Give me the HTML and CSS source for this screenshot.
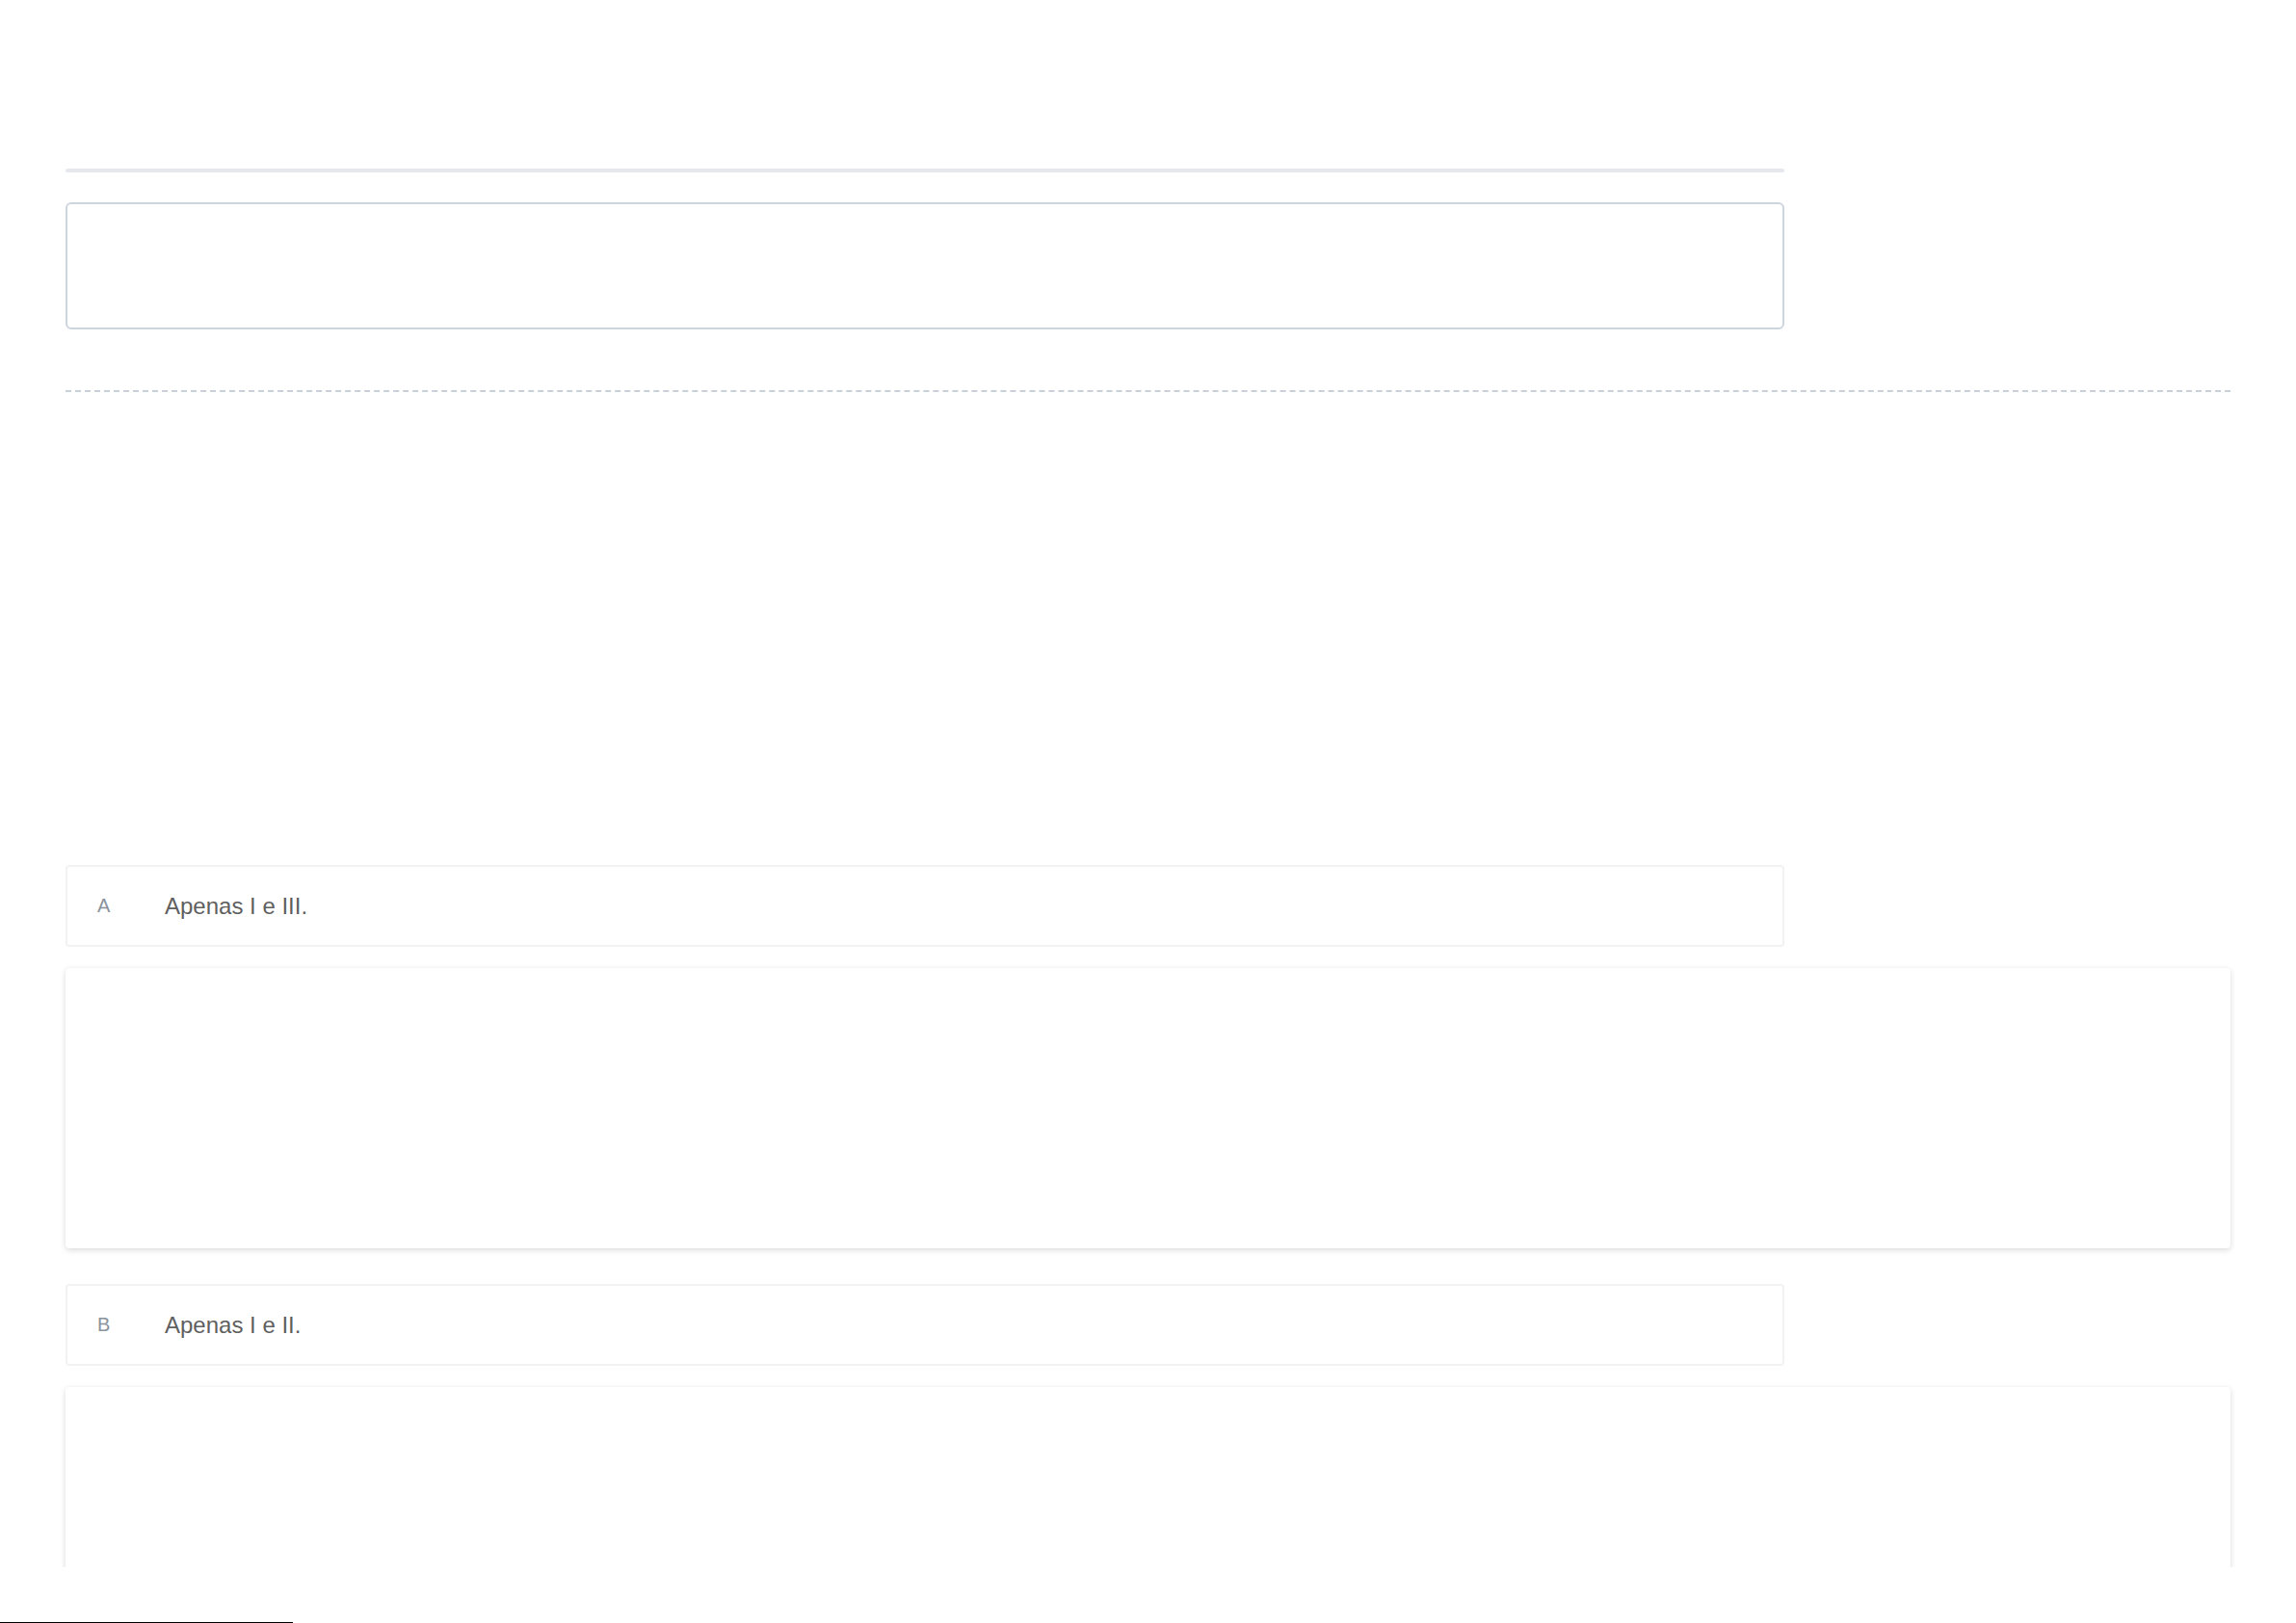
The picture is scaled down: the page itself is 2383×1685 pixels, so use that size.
FILE: index.html
```html
<!DOCTYPE html>
<html lang="pt-BR">
  <head>
    <meta charset="UTF-8" />
    <meta name="viewport" content="width=device-width, initial-scale=1.0" />
    <title>Questão</title>
    <link rel="stylesheet" href="styles.css">
  </head>
  <body>
    <div class="viewport">
      <div class="question">
        <div class="progress"></div>
        <div class="answer-box"></div>
      </div>

      <div class="divider"></div>

      <div class="statement"></div>

      <ul class="options">
        <li class="option">
          <div class="option-row">
            <span class="letter">A</span>
            <span class="option-text">Apenas I e III.</span>
          </div>
          <div class="explain"></div>
        </li>
        <li class="option">
          <div class="option-row">
            <span class="letter">B</span>
            <span class="option-text">Apenas I e II.</span>
          </div>
          <div class="explain"></div>
        </li>
      </ul>
    </div>
    <div class="footer-line"></div>
  </body>
</html>
```

FILE: styles.css
```css
* {
  box-sizing: border-box;
  margin: 0;
  padding: 0;
}

html,
body {
  height: 100%;
  background: #fff;
  font-family: "Liberation Sans", Arial, sans-serif;
}

body {
  display: flex;
  flex-direction: column;
}

.viewport {
  height: 1627px;
  overflow: hidden;
  padding: 0 68px;
}

.question {
  width: 1784px;
  padding-top: 175px;
}

.progress {
  height: 4px;
  background-color: #e5e8ec;
  border-radius: 2px;
}

.answer-box {
  margin-top: 31px;
  height: 132px;
  border: 2px solid #cdd5df;
  border-radius: 6px;
}

.divider {
  margin-top: 63px;
  border-top: 2px dashed #c8d0da;
}

.statement {
  height: 491px;
}

.options {
  list-style: none;
}

.option + .option {
  margin-top: 37px;
}

.option-row {
  width: 1784px;
  height: 85px;
  display: flex;
  align-items: center;
  padding-left: 31px;
  border: 2px solid #f0f2f4;
  border-radius: 4px;
}

.letter {
  width: 70px;
  font-size: 20px;
  color: #8a929c;
}

.option-text {
  font-size: 24px;
  color: #5f5f5f;
}

.explain {
  margin-top: 22px;
  height: 291px;
  background: #fff;
  border-radius: 4px;
  box-shadow: 0 2px 6px rgba(0, 0, 0, 0.14), 0 0 2px rgba(0, 0, 0, 0.04);
}

.footer-line {
  margin-top: auto;
  width: 304px;
  height: 1px;
  background: #000;
}
```
